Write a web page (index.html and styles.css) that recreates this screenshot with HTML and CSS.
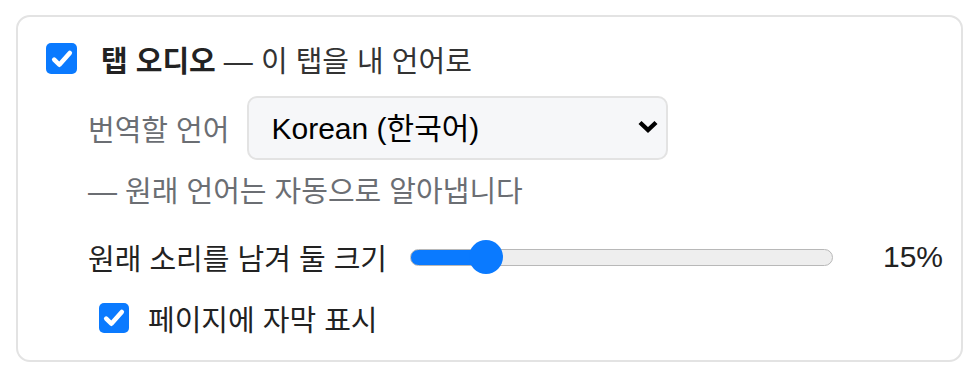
FILE: index.html
```html
<!DOCTYPE html>
<html lang="ko">
<head>
    <meta charset="UTF-8">
    <meta name="viewport" content="width=device-width, initial-scale=1.0">
    <title>탭 오디오</title>
    <link rel="stylesheet" href="styles.css">
</head>
<body>
    <div class="card">
        <label class="main-row">
            <span class="check">
                <svg viewBox="0 0 20 20"><path d="M3.5 10.5l4.3 4.3L16.5 5" fill="none" stroke="#fff" stroke-width="3.8" stroke-linecap="round" stroke-linejoin="round"/></svg>
            </span>
            <span class="main-text"><b>탭 오디오</b> — 이 탭을 내 언어로</span>
        </label>
        <div class="options">
            <div class="lang-row">
                <span class="muted">번역할 언어</span>
                <div class="select-wrap">
                    <select class="lang-select">
                        <option>Korean (한국어)</option>
                        <option>English</option>
                        <option>Japanese (日本語)</option>
                    </select>
                    <svg class="chevron" viewBox="0 0 22 15"><path d="M3 3.5l8 7.5 8-7.5" fill="none" stroke="#000" stroke-width="4.4"/></svg>
                </div>
            </div>
            <p class="muted hint">— 원래 언어는 자동으로 알아냅니다</p>
            <div class="volume-row">
                <span>원래 소리를 남겨 둘 크기</span>
                <input type="range" class="slider" min="0" max="100" value="15" style="--fill: 17.7%">
                <span class="value">15%</span>
            </div>
            <label class="sub-row">
                <span class="check small">
                    <svg viewBox="0 0 20 20"><path d="M3.5 10.5l4.3 4.3L16.5 5" fill="none" stroke="#fff" stroke-width="3.8" stroke-linecap="round" stroke-linejoin="round"/></svg>
                </span>
                <span>페이지에 자막 표시</span>
            </label>
        </div>
    </div>
</body>
</html>
```

FILE: styles.css
```css
* {
    margin: 0;
    padding: 0;
    box-sizing: border-box;
    font-family: "Liberation Sans", "Noto Sans CJK KR", sans-serif;
}
body {
    background: #fff;
    padding: 15px 16px;
    color: #222;
    font-size: 29px;
}
.card {
    border: 2px solid #e3e3e3;
    border-radius: 14px;
    padding: 26px 18px 25px 28px;
}
.main-row {
    display: flex;
    align-items: center;
    gap: 24px;
    height: 31px;
}
.check {
    width: 31px;
    height: 31px;
    border-radius: 5px;
    background: #0a7aff;
    display: flex;
    align-items: center;
    justify-content: center;
    flex-shrink: 0;
}
.check svg {
    width: 24px;
    height: 24px;
}
.check.small {
    width: 30px;
    height: 30px;
}
.main-text {
    color: #333;
}
.main-text b {
    color: #222;
}
.options {
    margin-left: 42px;
}
.muted {
    color: #6b6e73;
}
.lang-row {
    display: flex;
    align-items: center;
    gap: 18px;
    margin-top: 22px;
}
.select-wrap {
    position: relative;
}
.lang-select {
    appearance: none;
    -webkit-appearance: none;
    width: 421px;
    height: 64px;
    border: 2px solid #e3e3e3;
    border-radius: 10px;
    background: #f6f7f9;
    font-size: 30px;
    color: #000;
    padding: 0 50px 0 22px;
}
.chevron {
    position: absolute;
    right: 9px;
    top: 23px;
    width: 22px;
    height: 15px;
    pointer-events: none;
}
.hint {
    line-height: 36px;
    margin-top: 14px;
}
.volume-row {
    display: flex;
    align-items: center;
    height: 36px;
    margin-top: 29px;
}
.slider {
    -webkit-appearance: none;
    appearance: none;
    width: 423px;
    height: 36px;
    margin-left: 23px;
    background: transparent;
}
.slider::-webkit-slider-runnable-track {
    height: 17px;
    border-radius: 9px;
    border: 1.5px solid #b8b8b8;
    background: linear-gradient(to right, #0a7aff var(--fill), #eeeeee var(--fill));
}
.slider::-webkit-slider-thumb {
    -webkit-appearance: none;
    width: 34px;
    height: 34px;
    border-radius: 50%;
    background: #0a7aff;
    margin-top: -10px;
    border: none;
}
.value {
    flex: 1;
    text-align: right;
    font-size: 30px;
}
.sub-row {
    display: flex;
    align-items: center;
    gap: 19px;
    height: 35px;
    margin-top: 25px;
    margin-left: 11px;
}
```
